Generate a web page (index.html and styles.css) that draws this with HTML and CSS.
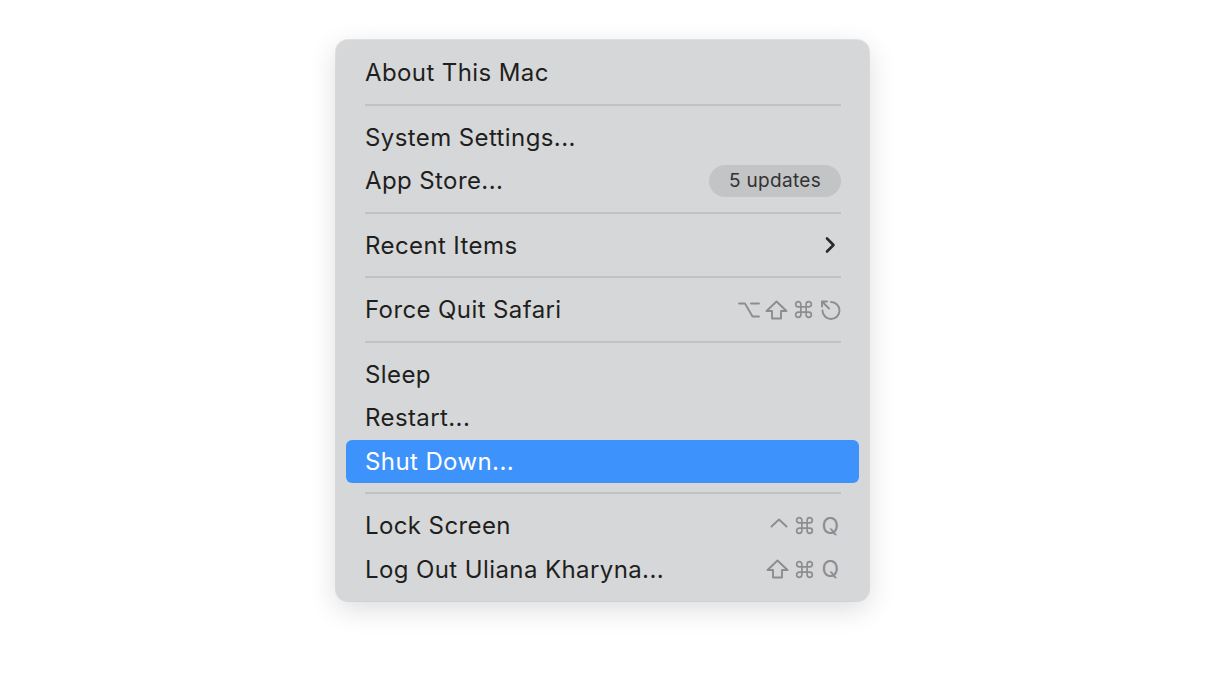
FILE: index.html
```html
<!DOCTYPE html>
<html lang="en">
<head>
    <meta charset="UTF-8">
    <meta name="viewport" content="width=device-width, initial-scale=1.0">
    <title>Apple Menu</title>
    <link rel="stylesheet" href="styles.css">
</head>
<body>
    <div class="menu">
        <div class="item"><span class="label">About This Mac</span></div>
        <div class="sep"></div>

        <div class="item"><span class="label">System Settings...</span></div>
        <div class="item">
            <span class="label">App Store...</span>
            <span class="badge">5 updates</span>
        </div>
        <div class="sep"></div>

        <div class="item">
            <span class="label">Recent Items</span>
            <svg class="chevron" width="12" height="18" viewBox="0 0 12 18">
                <polyline points="3,2.5 9.5,9 3,15.5" />
            </svg>
        </div>
        <div class="sep"></div>

        <div class="item">
            <span class="label">Force Quit Safari</span>
            <span class="keys">
                <!-- option -->
                <svg width="22" height="20" viewBox="0 0 22 20"><path d="M1 3.5h6l7.5 13h6.5M13 3.5h8" /></svg>
                <!-- shift -->
                <svg width="23" height="20" viewBox="0 0 23 20"><path d="M11.5 1.5l10 9.5h-5.5v7.5h-9v-7.5h-5.5z" /></svg>
                <!-- command -->
                <svg width="21" height="21" viewBox="0 0 24 24"><path d="M15 6v12a3 3 0 1 0 3-3H6a3 3 0 1 0 3 3V6a3 3 0 1 0-3 3h12a3 3 0 1 0-3-3" /></svg>
                <!-- escape -->
                <svg width="22" height="21" viewBox="0 0 22 21"><path d="M12 3a8.5 8.5 0 1 1-8.5 8.5M10 9.5L3 2.5M3 2.5v5M3 2.5h5" /></svg>
            </span>
        </div>
        <div class="sep"></div>

        <div class="item"><span class="label">Sleep</span></div>
        <div class="item"><span class="label">Restart...</span></div>
        <div class="item active"><span class="label">Shut Down...</span></div>
        <div class="sep"></div>

        <div class="item">
            <span class="label">Lock Screen</span>
            <span class="keys">
                <!-- control -->
                <svg width="20" height="20" viewBox="0 0 20 20"><polyline points="2.5,10.5 10,3.5 17.5,10.5" /></svg>
                <svg width="21" height="21" viewBox="0 0 24 24"><path d="M15 6v12a3 3 0 1 0 3-3H6a3 3 0 1 0 3 3V6a3 3 0 1 0-3 3h12a3 3 0 1 0-3-3" /></svg>
                <span class="key">Q</span>
            </span>
        </div>
        <div class="item">
            <span class="label">Log Out Uliana Kharyna...</span>
            <span class="keys">
                <svg width="23" height="20" viewBox="0 0 23 20"><path d="M11.5 1.5l10 9.5h-5.5v7.5h-9v-7.5h-5.5z" /></svg>
                <svg width="21" height="21" viewBox="0 0 24 24"><path d="M15 6v12a3 3 0 1 0 3-3H6a3 3 0 1 0 3 3V6a3 3 0 1 0-3 3h12a3 3 0 1 0-3-3" /></svg>
                <span class="key">Q</span>
            </span>
        </div>
    </div>
</body>
</html>
```

FILE: styles.css
```css
/* Apple menu */
html, body {
    height: 100%;
}

body {
    margin: 0;
    padding: 40px 0 0 336px;
    box-sizing: border-box;
    background-color: #fff;
    font-family: Inter, "Noto Sans", sans-serif;
}

.menu {
    width: 533px;
    box-sizing: border-box;
    padding: 11px 0 10px;
    background-color: #d6d7d9;
    border-radius: 12px;
    box-shadow: 0 0 0 1px rgba(0, 0, 0, 0.09), 0 8px 28px rgba(0, 0, 0, 0.14);
}

.item {
    display: flex;
    align-items: center;
    justify-content: space-between;
    height: 43.5px;
    margin: 0 10px;
    padding: 0 18px 0 19px;
    border-radius: 6px;
    color: #1f1f20;
    font-size: 24px;
    letter-spacing: 0.4px;
}

.item.active {
    background-color: #3e92fc;
    color: #fff;
}

.sep {
    height: 2px;
    margin: 9px 28px 10px 29px;
    background-color: #c1c2c4;
}

.badge {
    padding: 4px 20px 5px;
    border-radius: 16px;
    background-color: #c3c4c6;
    color: #333;
    font-size: 19px;
    letter-spacing: 0.3px;
}

.chevron {
    margin-right: 5px;
}

.chevron polyline {
    fill: none;
    stroke: #2a2a2b;
    stroke-width: 2.6;
    stroke-linecap: round;
    stroke-linejoin: round;
}

.keys {
    display: flex;
    align-items: center;
    gap: 5px;
}

.keys svg path,
.keys svg polyline {
    fill: none;
    stroke: #8d8d8f;
    stroke-width: 1.9;
    stroke-linecap: round;
    stroke-linejoin: round;
}

.key {
    width: 21px;
    text-align: center;
    color: #8d8d8f;
    font-size: 23px;
}
```
